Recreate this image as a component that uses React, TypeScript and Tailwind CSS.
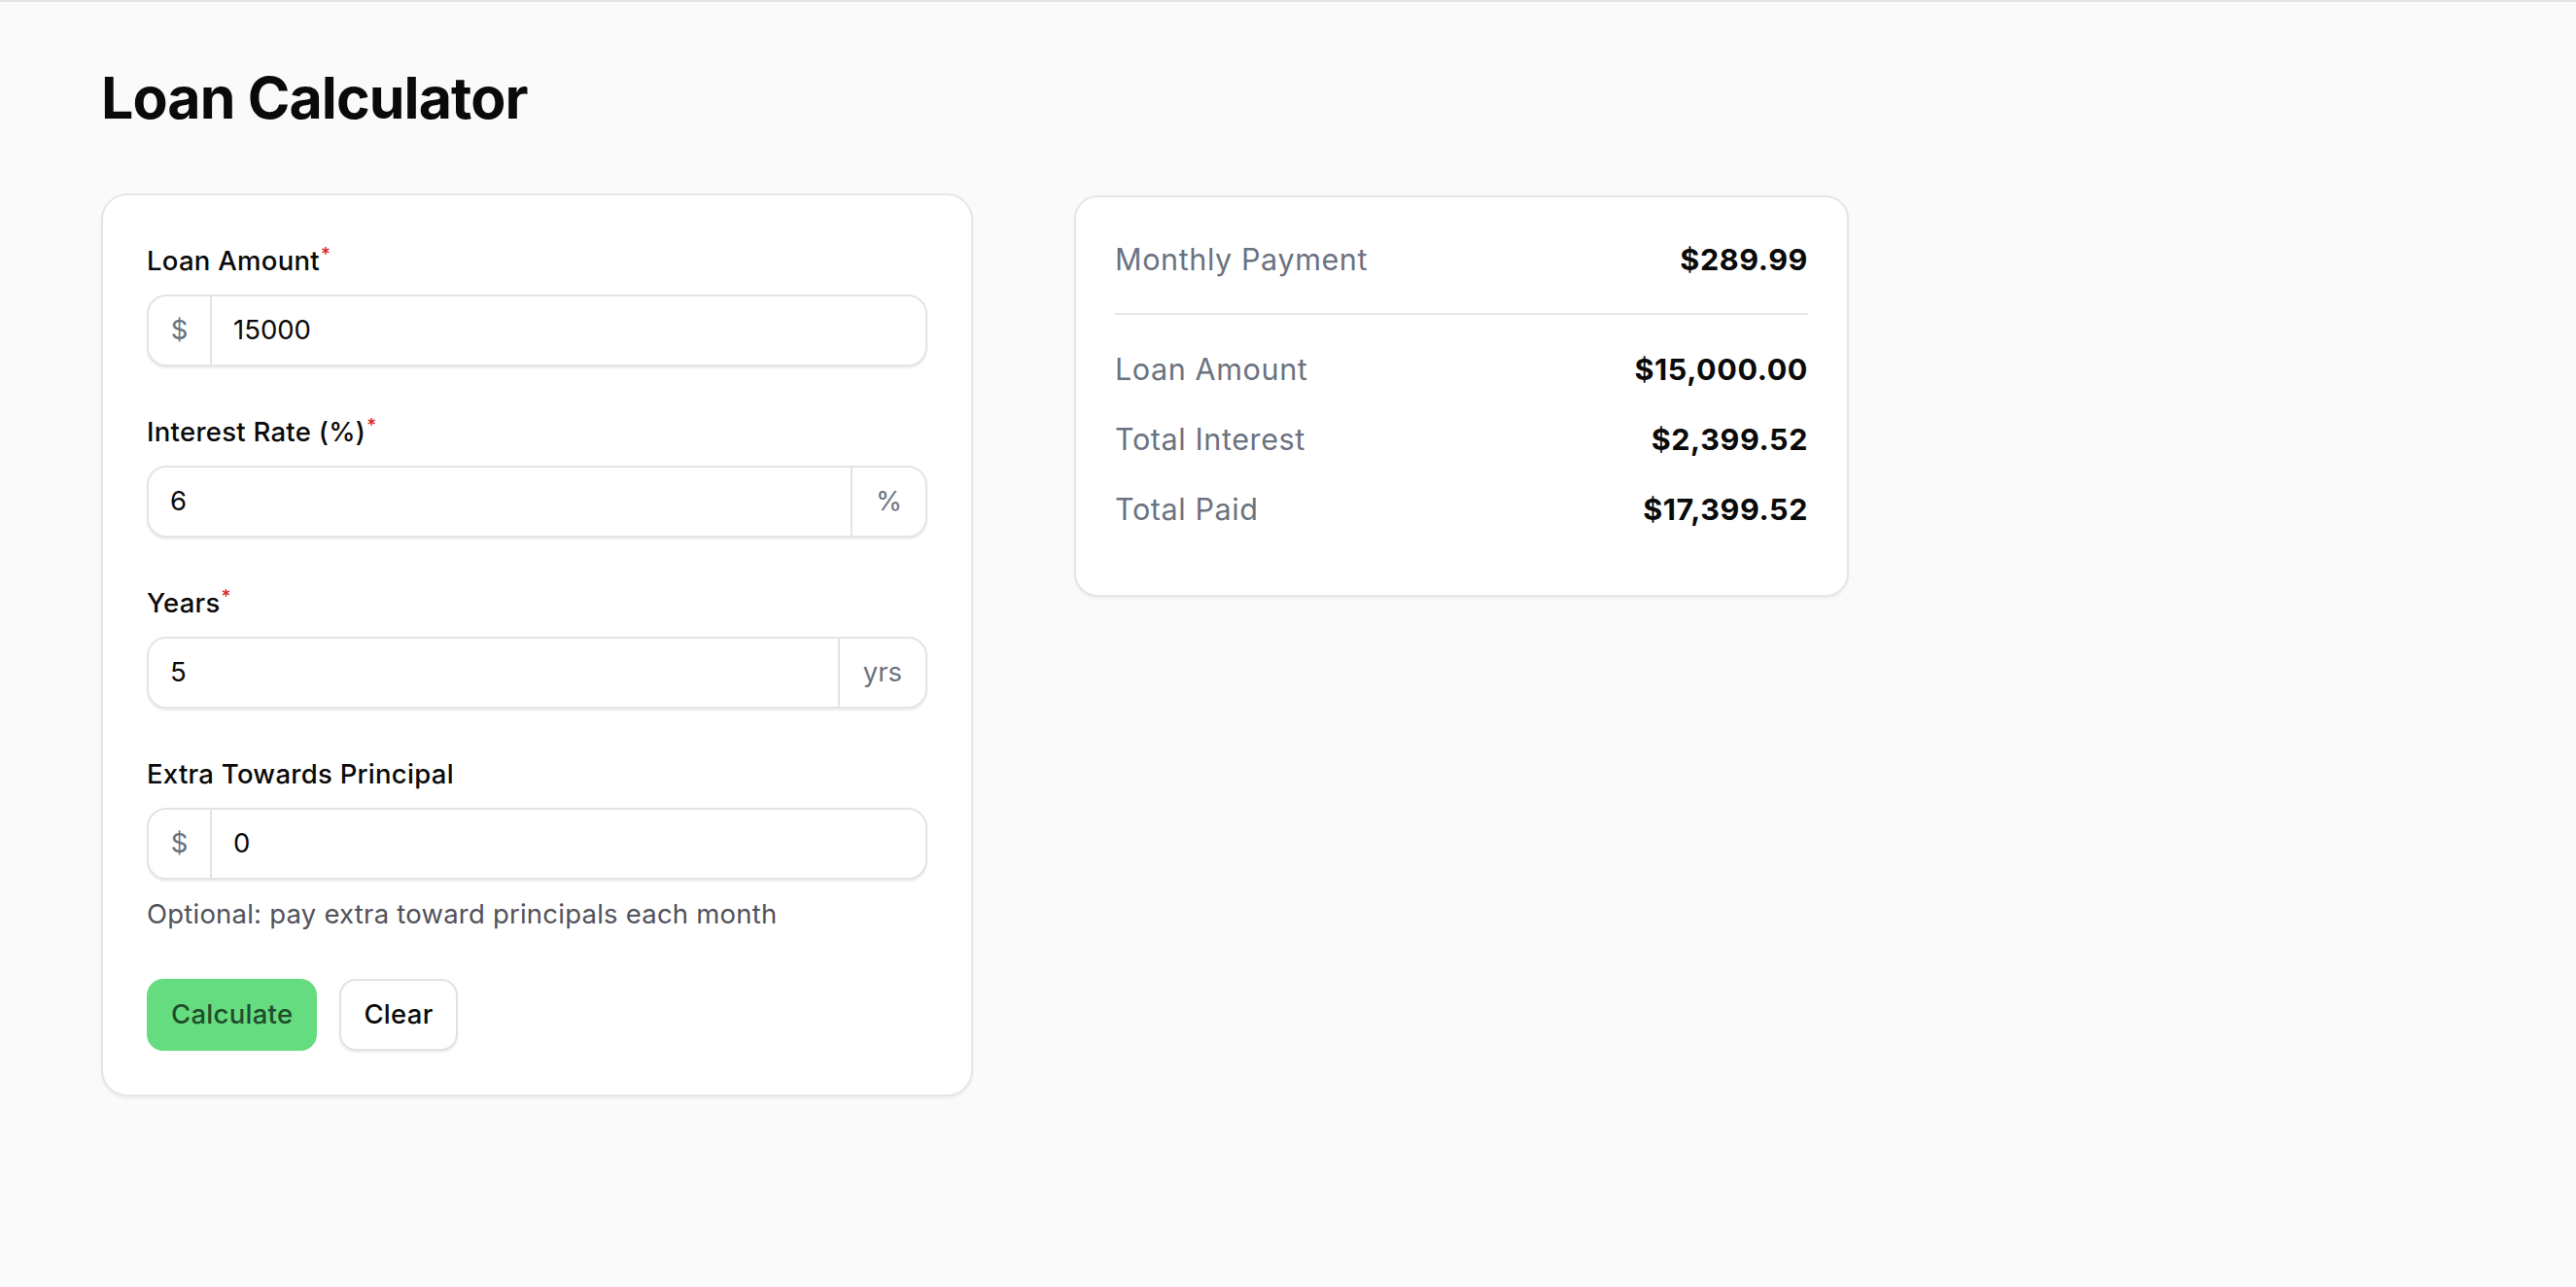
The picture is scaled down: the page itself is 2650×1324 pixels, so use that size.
import { useState } from "react";

type FieldProps = {
  label: string;
  required?: boolean;
  prefix?: string;
  suffix?: string;
  value: string;
  onChange: (v: string) => void;
  hint?: string;
};

function Field({ label, required, prefix, suffix, value, onChange, hint }: FieldProps) {
  return (
    <div className="flex flex-col">
      <label className="text-[27.5px] leading-[40px] font-medium tracking-[0.01em] text-[#0a0a0a]">
        {label}
        {required && <span className="relative -top-[10px] ml-[1px] text-[19px] leading-none text-[#dc2626]">*</span>}
      </label>
      <div className="mt-[15px] flex h-[74px] overflow-hidden rounded-[20px] border-2 border-[#e4e4e4] bg-white shadow-[0_2px_2px_rgba(0,0,0,0.07)]">
        {prefix && (
          <span className="flex w-[65px] shrink-0 items-center justify-center border-r-2 border-[#e4e4e4] text-[27.5px] text-[#6b7280]">
            {prefix}
          </span>
        )}
        <input
          className="w-full min-w-0 flex-1 bg-transparent px-[22px] text-[27.5px] text-[#0a0a0a] outline-none"
          value={value}
          onChange={(e) => onChange(e.target.value)}
        />
        {suffix && (
          <span className="flex shrink-0 items-center border-l-2 border-[#e4e4e4] px-[24px] text-[27.5px] text-[#6b7280]">
            {suffix}
          </span>
        )}
      </div>
      {hint && <p className="mt-[15px] text-[27.5px] leading-[40px] tracking-[0.008em] text-[#52525b]">{hint}</p>}
    </div>
  );
}

function Row({ label, value }: { label: string; value: string }) {
  return (
    <div className="flex items-center justify-between text-[30.5px] leading-[45px] tracking-[0.02em]">
      <span className="text-[#6b7280]">{label}</span>
      <span className="font-bold text-[#0a0a0a]">{value}</span>
    </div>
  );
}

export default function App() {
  const [amount, setAmount] = useState("15000");
  const [rate, setRate] = useState("6");
  const [years, setYears] = useState("5");
  const [extra, setExtra] = useState("0");

  return (
    <div className="min-h-screen border-t-2 border-[#e3e3e3] bg-[#fafafa] px-[104px] pt-[63px] font-['Inter',sans-serif]">
      <h1 className="text-[59px] leading-[72px] font-bold tracking-[-0.015em] text-[#0a0a0a]">Loan Calculator</h1>

      <div className="mt-[62px] flex items-start gap-[104px]">
        {/* Inputs */}
        <div className="flex w-[897px] flex-col gap-[47px] rounded-[27px] border-2 border-[#e6e6e6] bg-white px-[45px] pt-[47px] pb-[45px] shadow-[0_2px_3px_rgba(0,0,0,0.06)]">
          <Field label="Loan Amount" required prefix="$" value={amount} onChange={setAmount} />
          <Field label="Interest Rate (%)" required suffix="%" value={rate} onChange={setRate} />
          <Field label="Years" required suffix="yrs" value={years} onChange={setYears} />
          <Field
            label="Extra Towards Principal"
            prefix="$"
            value={extra}
            onChange={setExtra}
            hint="Optional: pay extra toward principals each month"
          />
          <div className="flex gap-[23px]">
            <button className="h-[74px] rounded-[17px] border-2 border-[#66dc80] bg-[#66dc80] px-[23px] text-[27.5px] font-medium tracking-[0.01em] text-[#1f4d2c]">
              Calculate
            </button>
            <button
              className="h-[74px] rounded-[17px] border-2 border-[#e2e2e2] bg-white px-[23px] text-[27.5px] font-medium tracking-[0.01em] text-[#0a0a0a] shadow-[0_2px_2px_rgba(0,0,0,0.07)]"
              onClick={() => {
                setAmount("");
                setRate("");
                setYears("");
                setExtra("");
              }}
            >
              Clear
            </button>
          </div>
        </div>

        {/* Results */}
        <div className="mt-[2px] w-[797px] rounded-[24px] border-2 border-[#e6e6e9] bg-white px-[40px] pt-[41px] pb-[66px] shadow-[0_2px_3px_rgba(0,0,0,0.05)]">
          <div className="border-b-2 border-[#e5e7eb] pb-[33px]">
            <Row label="Monthly Payment" value="$289.99" />
          </div>
          <div className="flex flex-col gap-[27px] pt-[33px]">
            <Row label="Loan Amount" value="$15,000.00" />
            <Row label="Total Interest" value="$2,399.52" />
            <Row label="Total Paid" value="$17,399.52" />
          </div>
        </div>
      </div>
    </div>
  );
}
